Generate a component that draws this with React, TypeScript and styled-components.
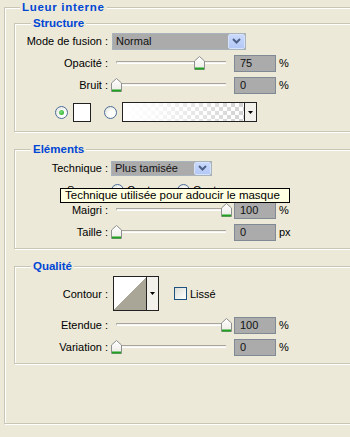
import React from "react";
import styled, { createGlobalStyle } from "styled-components";

const Global = createGlobalStyle`
  html, body { margin: 0; padding: 0; background: #ECE9D8; overflow: hidden; }
  body { font-family: "Liberation Sans", Arial, sans-serif; font-size: 11px; color: #000; }
`;

const Page = styled.div`
  position: relative;
  width: 420px;
  height: 437px;
  box-sizing: border-box;
  padding: 1px 0 0 4px;
`;

const Group = styled.fieldset<{ $inner?: boolean; $mt?: number; $pb?: number }>`
  margin: ${(p) => (p.$inner ? `${p.$mt ?? 0}px 0 0 9px` : "0")};
  padding: 0 0 ${(p) => p.$pb ?? 0}px 0;
  min-width: 0;
  border: 1px solid #C9C6B6;
  box-shadow: inset 1px 1px 0 #fff, 1px 1px 0 #fff;
  position: relative;
`;

const Legend = styled.legend<{ $ml: number; $ls?: number }>`
  margin-left: ${(p) => p.$ml}px;
  padding: 0 2px;
  background: #ECE9D8;
  color: #0046D5;
  font-weight: bold;
  font-size: 11.5px;
  letter-spacing: ${(p) => p.$ls ?? 0}px;
  line-height: 13px;
`;

const Row = styled.div<{ $h?: number; $mt?: number; $pl?: number }>`
  display: flex;
  align-items: center;
  height: ${(p) => p.$h ?? 22}px;
  margin-top: ${(p) => p.$mt ?? 0}px;
  padding-left: ${(p) => p.$pl ?? 0}px;
`;

const Label = styled.span`
  width: 93px;
  flex-shrink: 0;
  text-align: right;
  white-space: nowrap;
  color: #000;
`;

const SelectBox = styled.div<{ $w: number; $h: number; $ml: number }>`
  display: flex;
  width: ${(p) => p.$w}px;
  height: ${(p) => p.$h}px;
  margin-left: ${(p) => p.$ml}px;
  box-sizing: border-box;
  border: 1px solid #A9B3BC;
  background: #ABABAB;
`;

const SelectText = styled.span`
  flex: 1;
  display: flex;
  align-items: center;
  padding-left: 3px;
  color: #111;
  white-space: nowrap;
`;

const DropButton = styled.span`
  width: 17px;
  box-sizing: border-box;
  border: 1px solid #D6E1FA;
  border-radius: 2px;
  background: linear-gradient(#C9D9FC, #B4C8F6);
  display: flex;
  align-items: center;
  justify-content: center;
`;

const Slider = styled.div`
  position: relative;
  width: 120px;
  height: 14px;
  margin-left: 2px;
  flex-shrink: 0;
`;

const Track = styled.div`
  position: relative;
  top: 5px;
  margin: 0 4px 0 6px;
  height: 1px;
  border-top: 1px solid #A8A69C;
  border-bottom: 1px solid #FFFFFF;
  border-left: 1px solid #C0BEB4;
  background: #F4F3EE;
`;

const ThumbWrap = styled.div`
  position: absolute;
  top: 0;
  width: 11px;
  height: 14px;
`;

const NumBox = styled.div<{ $ml?: number }>`
  width: 42px;
  height: 17px;
  margin-left: ${(p) => p.$ml ?? 4}px;
  box-sizing: border-box;
  border: 1px solid #7F8A95;
  background: #ABABAB;
  padding-left: 5px;
  display: flex;
  align-items: center;
  color: #111;
`;

const Unit = styled.span`
  margin-left: 3px;
  color: #000;
`;

const RadioCircle = styled.span<{ $ml?: number }>`
  width: 13px;
  height: 13px;
  box-sizing: border-box;
  border-radius: 50%;
  border: 1px solid #4C6F99;
  background: radial-gradient(circle at 65% 65%, #fff 30%, #DCDCD4 100%);
  margin-left: ${(p) => p.$ml ?? 0}px;
  display: flex;
  align-items: center;
  justify-content: center;
  flex-shrink: 0;
`;

const Dot = styled.span`
  width: 5px;
  height: 5px;
  border-radius: 50%;
  background: radial-gradient(circle at 40% 40%, #7BE07B, #21A121);
`;

const RadioText = styled.span`
  margin-left: 3px;
`;

const Swatch = styled.span<{ $ml: number }>`
  width: 18px;
  height: 19px;
  box-sizing: border-box;
  border: 1px solid #222;
  background: #fff;
  margin-left: ${(p) => p.$ml}px;
`;

const GradientBox = styled.div<{ $ml: number }>`
  display: flex;
  width: 135px;
  height: 20px;
  box-sizing: border-box;
  border: 1px solid #222;
  margin-left: ${(p) => p.$ml}px;
`;

const GradientFill = styled.span`
  flex: 1;
  background:
    linear-gradient(to right, #fff 0%, rgba(255,255,255,0.85) 25%, rgba(255,255,255,0) 100%),
    repeating-conic-gradient(#D2D2D2 0% 25%, #FFFFFF 0% 50%) 0 0 / 8px 8px;
`;

const SmallArrow = styled.span`
  width: 11px;
  border-left: 1px solid #222;
  background: #F2F1EC;
  display: flex;
  align-items: center;
  justify-content: center;
`;

const ContourBox = styled.div`
  display: flex;
  width: 46px;
  height: 35px;
  box-sizing: border-box;
  border: 1px solid #222;
  margin-left: 5px;
`;

const CurveArea = styled.span`
  flex: 1;
  background: linear-gradient(to top left, #A9A597 50%, #FFFFFF 50%);
`;

const Check = styled.span`
  width: 13px;
  height: 13px;
  box-sizing: border-box;
  border: 1px solid #1C5180;
  background: linear-gradient(135deg, #DCDCD7, #fff);
  margin-left: 15px;
`;

const Tooltip = styled.div`
  position: absolute;
  left: 60px;
  top: 188px;
  width: 230px;
  height: 15px;
  box-sizing: border-box;
  border: 1px solid #000;
  background: #FFFFE1;
  color: #000;
  padding-left: 4px;
  font-size: 11.5px;
  line-height: 13px;
  white-space: nowrap;
  z-index: 2;
`;

const Chevron = () => (
  <svg width="9" height="6" viewBox="0 0 9 6">
    <path d="M1 1 L4.5 4.5 L8 1" fill="none" stroke="#4D6185" strokeWidth="2" />
  </svg>
);

const Tri = () => (
  <svg width="5" height="3" viewBox="0 0 5 3">
    <path d="M0 0 H5 L2.5 3 Z" fill="#000" />
  </svg>
);

const Thumb = () => (
  <svg width="11" height="14" viewBox="0 0 11 14">
    <defs>
      <linearGradient id="tg" x1="0" y1="0" x2="0" y2="1">
        <stop offset="0" stopColor="#FFFFFF" />
        <stop offset="1" stopColor="#ECEBE6" />
      </linearGradient>
    </defs>
    <path d="M0.5 13.5 V5 L5.5 0.5 L10.5 5 V13.5 Z" fill="url(#tg)" stroke="#8E8F8F" />
    <rect x="1" y="11.5" width="9" height="2" fill="#21A121" />
  </svg>
);

const SliderCtl = ({ value }: { value: number }) => (
  <Slider>
    <Track />
    <ThumbWrap style={{ left: `${Math.round(1 + 110 * value)}px` }}>
      <Thumb />
    </ThumbWrap>
  </Slider>
);

const Radio = ({ checked, ml }: { checked?: boolean; ml?: number }) => (
  <RadioCircle $ml={ml}>{checked && <Dot />}</RadioCircle>
);

const SliderRow = ({
  label,
  value,
  num,
  unit,
  mt,
}: {
  label: string;
  value: number;
  num: string;
  unit: string;
  mt?: number;
}) => (
  <Row $mt={mt}>
    <Label>{label}</Label>
    <SliderCtl value={value} />
    <NumBox>{num}</NumBox>
    <Unit>{unit}</Unit>
  </Row>
);

export default function App() {
  return (
    <>
      <Global />
      <Page>
        <Group $pb={59}>
          <Legend $ml={15} $ls={0.7}>Lueur interne</Legend>

          <Group $inner $mt={3} $pb={8}>
            <Legend $ml={16}>Structure</Legend>
            <Row>
              <Label>Mode de fusion :</Label>
              <SelectBox $w={134} $h={17} $ml={4}>
                <SelectText>Normal</SelectText>
                <DropButton>
                  <Chevron />
                </DropButton>
              </SelectBox>
            </Row>
            <SliderRow label="Opacité :" value={0.75} num="75" unit="%" />
            <SliderRow label="Bruit :" value={0} num="0" unit="%" />
            <Row $mt={5} $pl={40}>
              <Radio checked />
              <Swatch $ml={5} />
              <Radio ml={13} />
              <GradientBox $ml={5}>
                <GradientFill />
                <SmallArrow>
                  <Tri />
                </SmallArrow>
              </GradientBox>
            </Row>
          </Group>

          <Group $inner $mt={11} $pb={5}>
            <Legend $ml={16}>Eléments</Legend>
            <Row $mt={1}>
              <Label>Technique :</Label>
              <SelectBox $w={101} $h={15} $ml={3}>
                <SelectText>Plus tamisée</SelectText>
                <DropButton>
                  <Chevron />
                </DropButton>
              </SelectBox>
            </Row>
            <Row $h={16} $mt={3}>
              <Label>Source :</Label>
              <Radio ml={3} />
              <RadioText>Centre</RadioText>
              <Radio ml={17} checked />
              <RadioText>Contour</RadioText>
            </Row>
            <SliderRow label="Maigri :" value={1} num="100" unit="%" mt={1} />
            <SliderRow label="Taille :" value={0} num="0" unit="px" />
          </Group>

          <Group $inner $mt={11} $pb={5}>
            <Legend $ml={16}>Qualité</Legend>
            <Row $h={41}>
              <Label>Contour :</Label>
              <ContourBox>
                <CurveArea />
                <SmallArrow>
                  <Tri />
                </SmallArrow>
              </ContourBox>
              <Check />
              <RadioText>Lissé</RadioText>
            </Row>
            <SliderRow label="Etendue :" value={1} num="100" unit="%" />
            <SliderRow label="Variation :" value={0} num="0" unit="%" />
          </Group>
        </Group>
        <Tooltip>Technique utilisée pour adoucir le masque</Tooltip>
      </Page>
    </>
  );
}
